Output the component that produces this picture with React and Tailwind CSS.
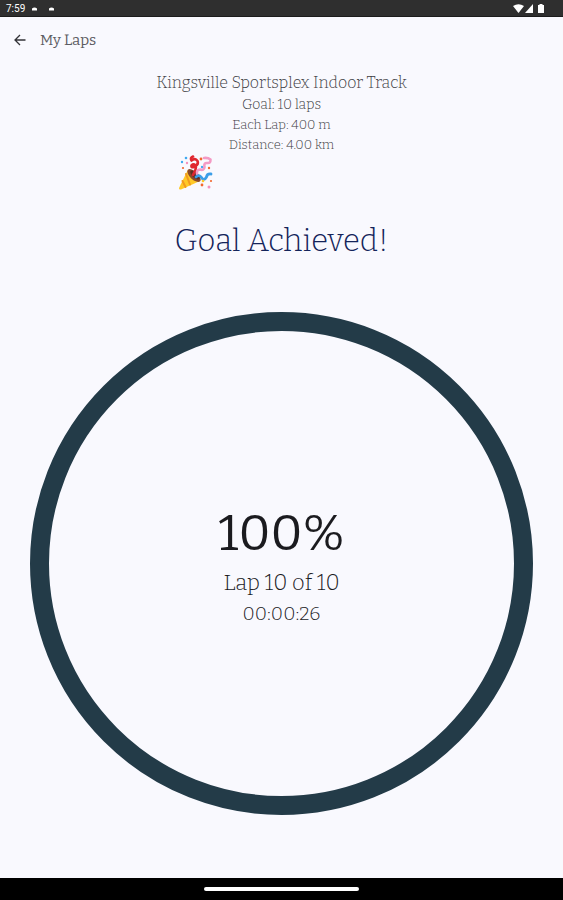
import React from 'react';

const lap = {
    track: 'Kingsville Sportsplex Indoor Track',
    goal: 'Goal: 10 laps',
    length: 'Each Lap: 400 m',
    distance: 'Distance: 4.00 km',
    count: 'Lap 10 of 10',
    time: '00:00:26',
};

const StatusBar = () => (
    <div className="flex h-[17px] items-center justify-between border-b border-[#1c1c1c] bg-[#2f2f2f] pt-0.5 pr-[18px] pl-1.5 text-white">
        <div className="flex items-center font-['Roboto',sans-serif] text-[10px] leading-3 font-normal">
            <span>7:59</span>
            <svg className="ml-1.5 h-1 w-6" viewBox="0 0 24 4" fill="currentColor">
                <path d="M1 3.500V1.500Q3.500-.5 6 1.500V3.500ZM18 3.500V1.500Q20.500-.5 23 1.500V3.500Z" />
            </svg>
        </div>
        <svg className="h-2.5 w-8" viewBox="0 0 32 10" fill="currentColor">
            <path d="M0 2Q5.500-1.500 11 2L5.500 9Z" />
            <path d="M20 0V9H12Z" />
            <path d="M25 1H26.500V0H29.500V1H31V9H25Z" />
        </svg>
    </div>
);

const PartyPopper = () => (
    <svg className="h-9 w-9" viewBox="0 0 36 36" fill="none" strokeLinecap="round" strokeLinejoin="round" role="img" aria-label="Party popper">
        <path d="M10 14.500 1 33Q.7 35 3 34.500L22 26Z" fill="#ffc928" />
        <path d="M8 19 12 29.500M4.500 26 7.500 32" stroke="#f29a1f" strokeWidth="2" />
        <ellipse cx="16" cy="20.500" rx="8.300" ry="4" transform="rotate(43 16 20.500)" fill="#8b4a2b" />
        <ellipse cx="17" cy="20" rx="6" ry="2.600" transform="rotate(43 17 20)" fill="#5b2f24" />
        <path d="M15 20Q19 14 17.500 10.500Q15.500 8.500 13.500 10.500Q13 13 16 12Q21 10 19.500 6Q17 2.500 13.500 5.500Q12 2.500 15 1.500" stroke="#e0262f" strokeWidth="2.600" />
        <path d="M19 19Q18.500 14.500 22 14.500Q26 16 26.500 12Q25.500 7.500 29.500 8Q32.500 8.500 32.500 4.500Q30 2.500 26 3" stroke="#f49ac4" strokeWidth="2.600" />
        <path d="M18 22Q21 19 23.500 22.500Q26 26.500 28.500 22Q29 18.500 33 19" stroke="#3b9ee8" strokeWidth="2.800" />
        <g fill="#40a9f0">
            <circle cx="8" cy="3" r="1.300" />
            <circle cx="4" cy="7" r="1.200" />
            <circle cx="24" cy="12" r="1.200" />
        </g>
        <g fill="#f2672e">
            <circle cx="5" cy="13" r="1.100" />
            <circle cx="23" cy="4" r="1.400" />
            <circle cx="31" cy="13" r="1.200" />
            <circle cx="24" cy="30" r="1.400" />
            <circle cx="33" cy="26" r="1.100" />
        </g>
        <g fill="#f590bb">
            <circle cx="9" cy="8" r="1.200" />
            <circle cx="31" cy="32" r="1.500" />
        </g>
        <circle cx="25" cy="26" r="1.300" fill="#ffc928" />
    </svg>
);

const ProgressRing = () => (
    <div className="mx-[30px] mt-[51px] aspect-square rounded-full border-[19px] border-[#233b48]">
        <div className="flex h-full flex-col items-center justify-center text-[#1b1b1f]">
            <p className="text-[50px] leading-[64px] font-normal">100%</p>
            <p className="text-[22px] leading-9">{lap.count}</p>
            <p className="text-[19px] leading-[26px]">{lap.time}</p>
        </div>
    </div>
);

const App = () => (
    <div className="flex min-h-screen flex-col bg-[#f9f9fe] font-['Bitter','DejaVu_Serif',serif] font-light">
        <StatusBar />
        <header className="flex h-[46px] items-center px-3 text-[#5c5c62]">
            <button type="button" aria-label="Back" className="p-0.5">
                <svg className="h-3 w-3" viewBox="0 0 12 12" fill="none" stroke="#333338" strokeWidth="1.300">
                    <path d="M11.500 6H1.200M6 1 1 6 6 11" />
                </svg>
            </button>
            <h1 className="ml-3 text-[15px] leading-6 font-normal">My Laps</h1>
        </header>
        <main className="flex-1">
            <div className="flex flex-col items-center pt-2 text-[#3c3c42]">
                <h2 className="text-base leading-6">{lap.track}</h2>
                <p className="text-sm leading-5">{lap.goal}</p>
                <p className="text-[13px] leading-5">{lap.length}</p>
                <p className="text-[13px] leading-5">{lap.distance}</p>
            </div>
            <div className="flex justify-center pr-[172px]">
                <PartyPopper />
            </div>
            <h2 className="mt-[30px] text-center text-[31px] leading-10 text-[#14245a]">Goal Achieved!</h2>
            <ProgressRing />
        </main>
        <footer className="flex h-[22px] items-center justify-center bg-black">
            <div className="h-1 w-[155px] rounded-full bg-white" />
        </footer>
    </div>
);

export default App;
